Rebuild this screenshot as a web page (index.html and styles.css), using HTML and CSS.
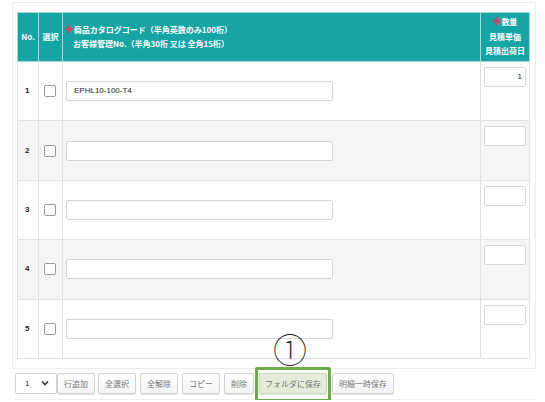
FILE: index.html
```html
<!DOCTYPE html>
<html lang="ja">
<head>
<meta charset="utf-8">
<link rel="stylesheet" href="styles.css">
</head>
<body>
<div class="panel">
  <table class="grid">
    <colgroup>
      <col class="c-no"><col class="c-sel"><col class="c-main"><col class="c-qty">
    </colgroup>
    <thead>
      <tr>
        <th class="h-center">No.</th>
        <th class="h-center">選択</th>
        <th class="h-main"><span class="req">※</span>商品カタログコード（半角英数のみ100桁）<br><span class="indent">お客様管理No.（半角30桁 又は 全角15桁）</span></th>
        <th class="h-center"><span class="req">※</span>数量<br>見積単価<br>見積出荷日</th>
      </tr>
    </thead>
    <tbody>
      <tr>
        <td class="num">1</td>
        <td class="chk"><span class="box"></span></td>
        <td class="code"><div class="field">EPHL10-100-T4</div></td>
        <td class="qty"><div class="qbox">1</div></td>
      </tr>
      <tr class="alt">
        <td class="num">2</td>
        <td class="chk"><span class="box"></span></td>
        <td class="code"><div class="field"></div></td>
        <td class="qty"><div class="qbox"></div></td>
      </tr>
      <tr>
        <td class="num">3</td>
        <td class="chk"><span class="box"></span></td>
        <td class="code"><div class="field"></div></td>
        <td class="qty"><div class="qbox"></div></td>
      </tr>
      <tr class="alt">
        <td class="num">4</td>
        <td class="chk"><span class="box"></span></td>
        <td class="code"><div class="field"></div></td>
        <td class="qty"><div class="qbox"></div></td>
      </tr>
      <tr>
        <td class="num">5</td>
        <td class="chk"><span class="box"></span></td>
        <td class="code"><div class="field"></div></td>
        <td class="qty"><div class="qbox"></div></td>
      </tr>
    </tbody>
  </table>
</div>
<div class="toolbar">
  <div class="sel"><span>1</span><svg width="8" height="6" viewBox="0 0 8 6"><path d="M1 1.5 L4 4.5 L7 1.5" fill="none" stroke="#333" stroke-width="1.6"/></svg></div>
  <span class="btn btn-add">行追加</span>
  <span class="btn">全選択</span>
  <span class="btn">全解除</span>
  <span class="btn">コピー</span>
  <span class="btn">削除</span>
  <span class="hl"><span class="btn btn-green">フォルダに保存</span><span class="mark">①</span></span>
  <span class="btn">明細一時保存</span>
</div>
</body>
</html>
```

FILE: styles.css
```css
html, body {
  margin: 0;
  padding: 0;
  background: #ffffff;
}
body {
  font-family: "Noto Sans CJK JP", "Liberation Sans", sans-serif;
  font-size: 8px;
  color: #333;
}
.panel {
  margin: 2px 9px 0 12px;
  border: 1px solid #ececec;
  padding: 9px 5px 9px 4px;
}
.grid {
  width: 513px;
  border-collapse: collapse;
  table-layout: fixed;
}
.c-no { width: 21px; }
.c-sel { width: 24px; }
.c-qty { width: 49px; }
.grid th {
  background: #17a4a5;
  color: #fff;
  font-size: 8px;
  font-weight: bold;
  line-height: 14.5px;
  border: 1px solid #a6dada;
  height: 48px;
  padding: 0;
  vertical-align: middle;
}
.h-center { text-align: center; }
.grid th.h-main {
  text-align: left;
  padding-left: 2px;
}
.indent { padding-left: 8px; }
.req {
  color: #f0304c;
  font-family: "DejaVu Sans", sans-serif;
  font-size: 9px;
  font-weight: bold;
}
.grid td {
  border: 1px solid #e2e2e2;
  height: 58.4px;
  padding: 0;
  vertical-align: middle;
  line-height: 10px;
}
.grid tr.alt td { background: #f5f5f5; }
.grid td.num {
  font-size: 8px;
  font-weight: bold;
  font-family: "Liberation Sans", sans-serif;
  padding-left: 7px;
  color: #222;
}
.chk { text-align: center; }
.box {
  display: inline-block;
  width: 10px;
  height: 10px;
  border: 1px solid #9a9a9a;
  border-radius: 2px;
  background: #fff;
  vertical-align: middle;
  margin-right: 2px;
}
.grid td.code { padding-left: 3px; }
.field {
  width: 267px;
  height: 20px;
  box-sizing: border-box;
  border: 1px solid #d4d4d4;
  border-radius: 2px;
  background: #fff;
  font-family: "Liberation Sans", sans-serif;
  font-size: 8px;
  line-height: 18px;
  padding-left: 7px;
  color: #222;
}
.grid td.qty {
  vertical-align: top;
}
.qbox {
  width: 42px;
  height: 20px;
  margin: 5px 0 0 3px;
  box-sizing: border-box;
  border: 1px solid #d8d8d8;
  border-radius: 2px;
  background: #fff;
  font-family: "Liberation Sans", sans-serif;
  font-size: 8px;
  line-height: 18px;
  text-align: right;
  padding-right: 3px;
  color: #222;
}
.toolbar {
  display: flex;
  align-items: center;
  margin: 4px 9px 0 15px;
  padding-bottom: 5px;
  border-bottom: 1px solid #f0f0f0;
}
.toolbar > * { flex-shrink: 0; }
.sel {
  box-sizing: border-box;
  width: 42px;
  height: 21px;
  border: 1px solid #d4d4d4;
  border-radius: 2px;
  background: #fff;
  display: flex;
  align-items: center;
  justify-content: space-between;
  padding: 0 7px 0 9px;
  font-family: "Liberation Sans", sans-serif;
  font-size: 8px;
  color: #333;
}
.btn {
  box-sizing: border-box;
  height: 21px;
  padding: 0 6px;
  border: 1px solid #d2d2d2;
  border-radius: 2px;
  background: linear-gradient(#ffffff, #f4f4f4);
  box-shadow: 0 1px 1px rgba(0,0,0,0.12);
  font-size: 8px;
  line-height: 19px;
  color: #777;
  white-space: nowrap;
  margin-right: 4px;
}
.btn-add { margin-right: 3px; }
.hl {
  position: relative;
  display: inline-flex;
  margin: 0 5px 0 1px;
}
.hl .btn { margin-right: 0; }
.btn-green {
  background: #e3edd9;
  border-color: #c9d6bd;
  padding: 0 5px;
}
.hl::after {
  content: "";
  position: absolute;
  left: -4px;
  right: -4px;
  top: -6px;
  bottom: -8px;
  border: 3px solid #6caa4c;
  border-radius: 2px;
}
.mark {
  position: absolute;
  left: 14px;
  top: -41px;
  font-family: "Noto Sans CJK JP", sans-serif;
  font-size: 34px;
  line-height: 34px;
  color: #222;
  font-weight: 100;
}
```
